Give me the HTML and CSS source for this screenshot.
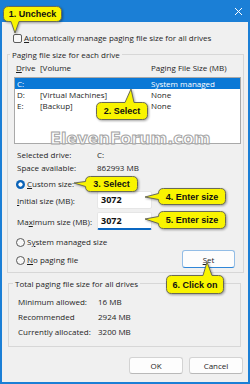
FILE: index.html
```html
<!DOCTYPE html>
<html lang="en">
<head>
  <meta charset="UTF-8" />
  <title>Virtual Memory</title>
  <meta name="viewport" content="width=device-width, initial-scale=1" />
  <link rel="stylesheet" href="styles.css">
</head>
<body>

  <div class="window">
    <div class="titlebar">
      <svg class="close" width="7" height="7" viewBox="0 0 7 7" aria-hidden="true">
        <path d="M0 0L7 7M7 0L0 7" stroke="#fff" stroke-width="1"/>
      </svg>
    </div>

    <div class="dialog">
      <label class="check-row">
        <span class="checkbox"></span>
        <span><u>A</u>utomatically manage paging file size for all drives</span>
      </label>

      <!-- Each drive -->
      <fieldset class="group group-drives">
        <legend>Paging file size for each drive</legend>
        <div class="list-head">
          <span><u>D</u>rive</span><span>[Volume</span><span>Paging File Size (MB)</span>
        </div>
        <div class="listbox">
          <div class="list-row is-selected"><span>C:</span><span></span><span>System managed</span></div>
          <div class="list-row"><span>D:</span><span>[Virtual Machines]</span><span>None</span></div>
          <div class="list-row"><span>E:</span><span>[Backup]</span><span>None</span></div>
        </div>

        <div class="kv kv-drive">
          <span>Selected drive:</span><span>C:</span>
          <span>Space available:</span><span>862993 MB</span>
        </div>

        <div class="radio-row radio-custom"><span class="radio is-on"></span><span><u>C</u>ustom size:</span></div>
        <div class="field-row field-initial">
          <span class="field-label"><u>I</u>nitial size (MB):</span>
          <span class="textbox">3072</span>
        </div>
        <div class="field-row field-max">
          <span class="field-label">Ma<u>x</u>imum size (MB):</span>
          <span class="textbox is-focused">3072</span>
        </div>

        <div class="bottom-row">
          <div class="radios">
            <div class="radio-row"><span class="radio"></span><span>S<u>y</u>stem managed size</span></div>
            <div class="radio-row"><span class="radio"></span><span><u>N</u>o paging file</span></div>
          </div>
          <button type="button" class="btn btn-set"><u>S</u>et</button>
        </div>
      </fieldset>

      <!-- All drives -->
      <fieldset class="group group-total">
        <legend>Total paging file size for all drives</legend>
        <div class="kv kv-total">
          <span>Minimum allowed:</span><span>16 MB</span>
          <span>Recommended</span><span>2924 MB</span>
          <span>Currently allocated:</span><span>3200 MB</span>
        </div>
      </fieldset>

      <div class="dialog-buttons">
        <button type="button" class="btn">OK</button>
        <button type="button" class="btn">Cancel</button>
      </div>
    </div>

    <!-- watermark -->
    <div class="watermark">ElevenForum.com</div>

    <!-- callouts -->
    <div class="callout c1">
      <svg class="callout-shape" aria-hidden="true"><path d="M5.5,.5 H53.5 Q58.5,.5 58.5,5.5 V10.5 Q58.5,15.5 53.5,15.5 H16 L12,27 L8,15.5 H5.5 Q.5,15.5 .5,10.5 V5.5 Q.5,.5 5.5,.5 Z"/></svg>
      <span>1. Uncheck</span>
    </div>
    <div class="callout c2">
      <svg class="callout-shape" aria-hidden="true"><path d="M5.5,.5 H29 L35,-13 L38,.5 H46.5 Q51.5,.5 51.5,5.5 V12.5 Q51.5,17.5 46.5,17.5 H5.5 Q.5,17.5 .5,12.5 V5.5 Q.5,.5 5.5,.5 Z"/></svg>
      <span>2. Select</span>
    </div>
    <div class="callout c3">
      <svg class="callout-shape" aria-hidden="true"><path d="M5.5,.5 H47.5 Q52.5,.5 52.5,5.5 V10.5 Q52.5,15.5 47.5,15.5 H5.5 Q.5,15.5 .5,10.5 L-11,7 L.5,5.5 Q.5,.5 5.5,.5 Z"/></svg>
      <span>3. Select</span>
    </div>
    <div class="callout c4">
      <svg class="callout-shape" aria-hidden="true"><path d="M5.5,.5 H62.5 Q67.5,.5 67.5,5.5 V11.5 Q67.5,16.5 62.5,16.5 H5.5 Q.5,16.5 .5,11.5 L-13,9 L.5,5.5 Q.5,.5 5.5,.5 Z"/></svg>
      <span>4. Enter size</span>
    </div>
    <div class="callout c5">
      <svg class="callout-shape" aria-hidden="true"><path d="M5.5,.5 H62.5 Q67.5,.5 67.5,5.5 V12.5 Q67.5,17.5 62.5,17.5 H5.5 Q.5,17.5 .5,12.5 L-13,8 L.5,5.5 Q.5,.5 5.5,.5 Z"/></svg>
      <span>5. Enter size</span>
    </div>
    <div class="callout c6">
      <svg class="callout-shape" aria-hidden="true"><path d="M5.5,.5 H37 L41,-13 L46,.5 H52.5 Q57.5,.5 57.5,5.5 V13.5 Q57.5,18.5 52.5,18.5 H5.5 Q.5,18.5 .5,13.5 V5.5 Q.5,.5 5.5,.5 Z"/></svg>
      <span>6. Click on</span>
    </div>
  </div>

</body>
</html>
```

FILE: styles.css
```css
* { box-sizing: border-box; }

body {
  margin: 0;
  background: #fff;
  font-family: "Open Sans", "Noto Sans", sans-serif;
  font-size: 8px;
  color: #1e1e1e;
}
u { text-underline-offset: 1px; }

/* ===== WINDOW ===== */
.window {
  position: relative;
  width: 250px; height: 384px;
  background: #f0f0f0;
  border: 2px solid #1b7fd6; border-top: 0;
  overflow: hidden;
}
.titlebar {
  height: 22px; margin: 0 -2px;
  background: #1b7fd6;
  display: flex; align-items: center; justify-content: flex-end;
  padding-right: 8px;
}

.dialog { display: flex; flex-direction: column; }

.check-row {
  display: flex; align-items: center; gap: 2px;
  height: 12px; margin: 10px 0 0 11px;
  line-height: 12px;
}
.checkbox {
  width: 9px; height: 9px;
  border: 1px solid #5c5c5c; border-radius: 2px;
  background: #f8f8f8;
}

/* ===== GROUP BOXES ===== */
.group {
  margin: 0; min-width: 0;
  border: 1px solid #d7d7d7;
  padding: 0 2px 4px 6px;
}
.group legend {
  padding: 0 2px; margin-left: -4px;
  line-height: 11px;
}
.group-drives { margin: 5px 4px 0 5px; }
.group-total { margin: 5px 7px 0 6px; padding: 0 2px 7px 8px; }

.list-head, .list-row {
  display: grid; grid-template-columns: 24px 111px 1fr;
  line-height: 11px; white-space: nowrap;
}
.list-head { margin-top: 2px; padding-left: 2px; }

.listbox {
  margin-top: 4px; height: 67px;
  background: #fff; border: 1px solid #a9a9a9;
}
.list-row { grid-template-columns: 23px 111px 1fr; padding-left: 2px; height: 11px; }
.list-row.is-selected { background: #0a78d6; color: #fff; }

.kv {
  display: grid; grid-template-columns: 80px auto;
  padding-left: 3px;
}
.kv-drive { margin-top: 4px; line-height: 13px; }
.kv-total { margin-top: 5px; line-height: 15px; padding-left: 1px; }

/* radios + fields */
.radio-row {
  display: flex; align-items: center; gap: 2px;
  height: 12px; line-height: 12px; padding-left: 2px;
}
.radio-custom { margin-top: 4px; }
.radio {
  width: 9px; height: 9px; border-radius: 50%;
  border: 1px solid #585858; background: #f7f7f7;
}
.radio.is-on {
  border: 0;
  background: radial-gradient(circle, #fff 0 1.8px, #0b63b8 2.4px);
}

.field-row { display: flex; align-items: center; padding-left: 3px; height: 18px; }
.field-initial { margin-top: 1px; }
.field-max { margin-top: 3px; }
.field-label { width: 80px; }
.textbox {
  width: 55px; height: 18px;
  background: #fff; border: 1px solid #e6e6e6; border-radius: 2px;
  padding-left: 3px;
  font-size: 9px; font-weight: 700; line-height: 16px; color: #111;
}
.textbox.is-focused { border-bottom: 2px solid #0a67c2; }

.bottom-row {
  display: flex; align-items: flex-end; justify-content: space-between;
  margin-top: 6px;
}
.radios { display: flex; flex-direction: column; gap: 6px; padding-bottom: 2px; }

/* buttons */
.btn {
  width: 54px; height: 17px; padding: 0;
  font: inherit; color: #1e1e1e;
  background: #fdfdfd;
  border: 1px solid #d3d3d3; border-bottom-color: #b9b9b9; border-radius: 3px;
}
.btn-set {
  width: 53px; height: 18px; margin-right: 6px;
  border-color: #93bde6; border-bottom-color: #2f86d8;
}
.dialog-buttons {
  display: flex; justify-content: flex-end; gap: 6px;
  margin-top: 10px; padding-right: 5px;
}

/* ===== WATERMARK ===== */
.watermark {
  position: absolute; left: 48px; top: 131px;
  font-family: "DejaVu Sans", sans-serif; font-weight: 700;
  font-size: 16px; line-height: 16px;
  color: rgba(255,255,255,0.85);
  -webkit-text-stroke: 1px #a3a3a3;
  white-space: nowrap;
}

/* ===== CALLOUTS ===== */
.callout {
  position: absolute;
  display: flex; align-items: center; justify-content: center;
  font-family: "Liberation Sans", Arial, sans-serif;
  font-size: 9px; font-weight: 700; color: #111;
  white-space: nowrap;
}
.callout span { position: relative; }
.callout-shape {
  position: absolute; left: 0; top: 0; width: 100%; height: 100%;
  overflow: visible;
  filter: drop-shadow(1px 1px 1px rgba(0,0,0,0.35));
}
.callout-shape path { fill: #f9f400; stroke: #6a6a55; stroke-width: 1; }

.c1 { left: 1px;   top: 6px;   width: 59px; height: 16px; }
.c2 { left: 94px;  top: 102px; width: 52px; height: 18px; }
.c3 { left: 83px;  top: 176px; width: 53px; height: 16px; }
.c4 { left: 156px; top: 188px; width: 68px; height: 17px; }
.c5 { left: 156px; top: 211px; width: 68px; height: 18px; }
.c6 { left: 164px; top: 275px; width: 58px; height: 19px; }
```
